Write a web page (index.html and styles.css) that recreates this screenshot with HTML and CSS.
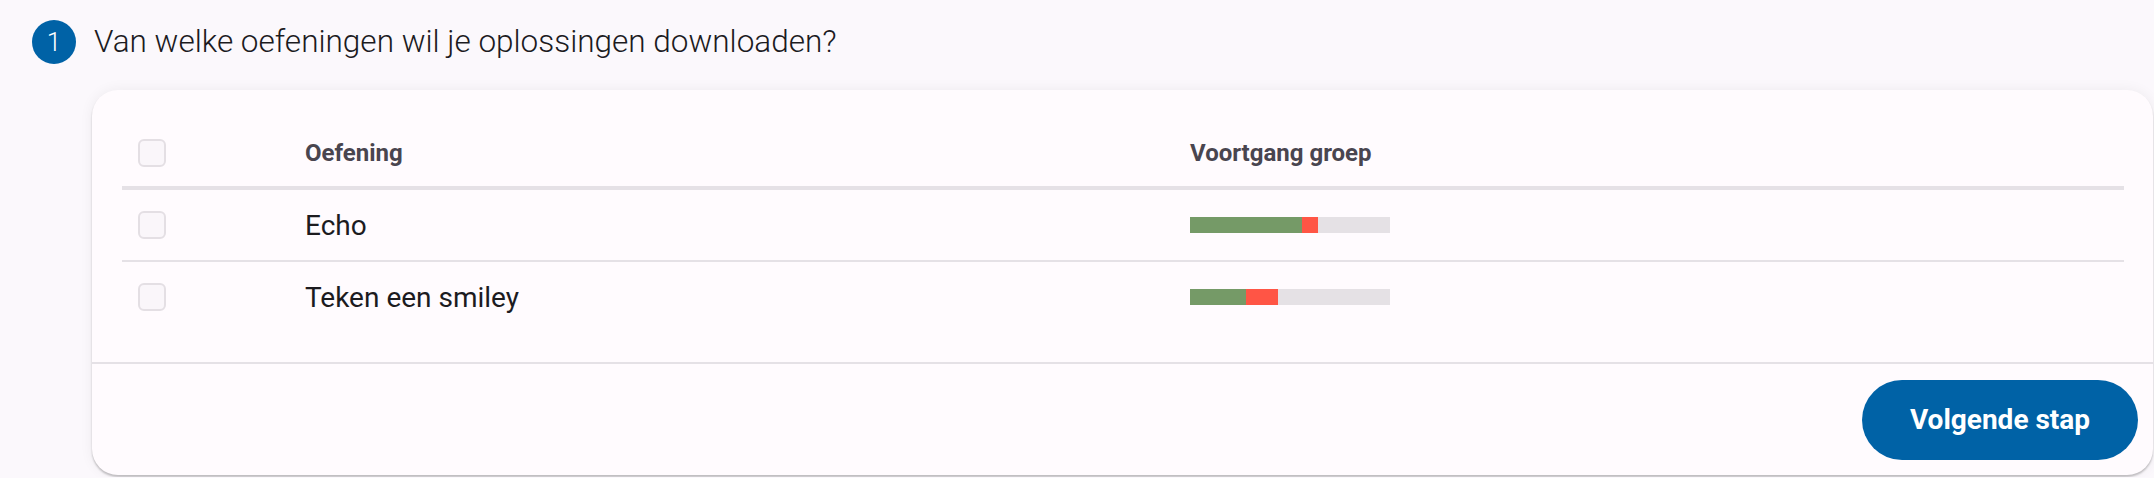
FILE: index.html
```html
<!DOCTYPE html>
<html>
<head>
    <title>Oplossingen downloaden</title>
    <link rel="stylesheet" href="styles.css">
</head>
<body>
    <div class="step-header">
        <span class="step-number">1</span>
        <span class="step-title">Van welke oefeningen wil je oplossingen downloaden?</span>
    </div>

    <div class="card">
        <div class="table">
            <div class="row head">
                <div class="cell"><span class="checkbox"></span></div>
                <div class="cell">Oefening</div>
                <div class="cell">Voortgang groep</div>
            </div>

            <div class="row">
                <div class="cell"><span class="checkbox"></span></div>
                <div class="cell">Echo</div>
                <div class="cell">
                    <div class="progress">
                        <div class="progress-ok" style="width: 56%"></div>
                        <div class="progress-wrong" style="width: 8%"></div>
                    </div>
                </div>
            </div>

            <div class="row">
                <div class="cell"><span class="checkbox"></span></div>
                <div class="cell">Teken een smiley</div>
                <div class="cell">
                    <div class="progress">
                        <div class="progress-ok" style="width: 28%"></div>
                        <div class="progress-wrong" style="width: 16%"></div>
                    </div>
                </div>
            </div>
        </div>

        <div class="card-footer">
            <button class="button">Volgende stap</button>
        </div>
    </div>
</body>
</html>
```

FILE: styles.css
```css
body
{
    margin: 0;
    background-color: #fbf8fc;
    color: #1c1b1f;
    font-family: Roboto, "Liberation Sans", sans-serif;
}

.step-header
{
    display: flex;
    align-items: center;
    padding: 20px 0 0 32px;
    height: 43px;
}

.step-number
{
    width: 44px;
    height: 44px;
    border-radius: 50%;
    background-color: #0062a6;
    color: white;
    font-size: 26px;
    font-weight: 300;
    display: flex;
    align-items: center;
    justify-content: center;
}

.step-title
{
    margin-left: 18px;
    font-size: 31.5px;
    font-weight: 300;
}

.card
{
    margin: 27px 1px 2px 92px;
    background-color: #fffbfe;
    border-radius: 26px;
    box-shadow: 0 2px 2px rgba(0, 0, 0, 0.22), 0 0 14px rgba(0, 0, 0, 0.06);
}

.table
{
    padding: 30px 29px 30px 30px;
}

.row
{
    display: grid;
    grid-template-columns: 183px 885px 1fr;
    align-items: center;
    height: 70px;
    border-bottom: 2px solid #e5e1e6;
    font-size: 28px;
}

.row:last-child
{
    border-bottom: none;
}

.row.head
{
    height: 66px;
    border-bottom: 4px solid #e5e1e6;
    font-size: 24px;
    font-weight: bold;
    color: #49454f;
}

.cell
{
    display: flex;
    align-items: center;
}

.checkbox
{
    margin-left: 16px;
    width: 24px;
    height: 24px;
    border: 2px solid #e4dfe4;
    border-radius: 6px;
    background-color: #faf6fa;
}

.progress
{
    display: flex;
    width: 200px;
    height: 16px;
    background-color: #e5e1e5;
}

.progress-ok
{
    background-color: #759a67;
}

.progress-wrong
{
    background-color: #ff5545;
}

.card-footer
{
    display: flex;
    justify-content: flex-end;
    align-items: center;
    height: 111px;
    padding-right: 15px;
    border-top: 2px solid #e5e1e6;
}

.button
{
    width: 276px;
    height: 80px;
    border: none;
    border-radius: 40px;
    background-color: #0062a6;
    color: white;
    font-family: Roboto, "Liberation Sans", sans-serif;
    font-size: 28px;
    font-weight: bold;
    cursor: pointer;
}
```
